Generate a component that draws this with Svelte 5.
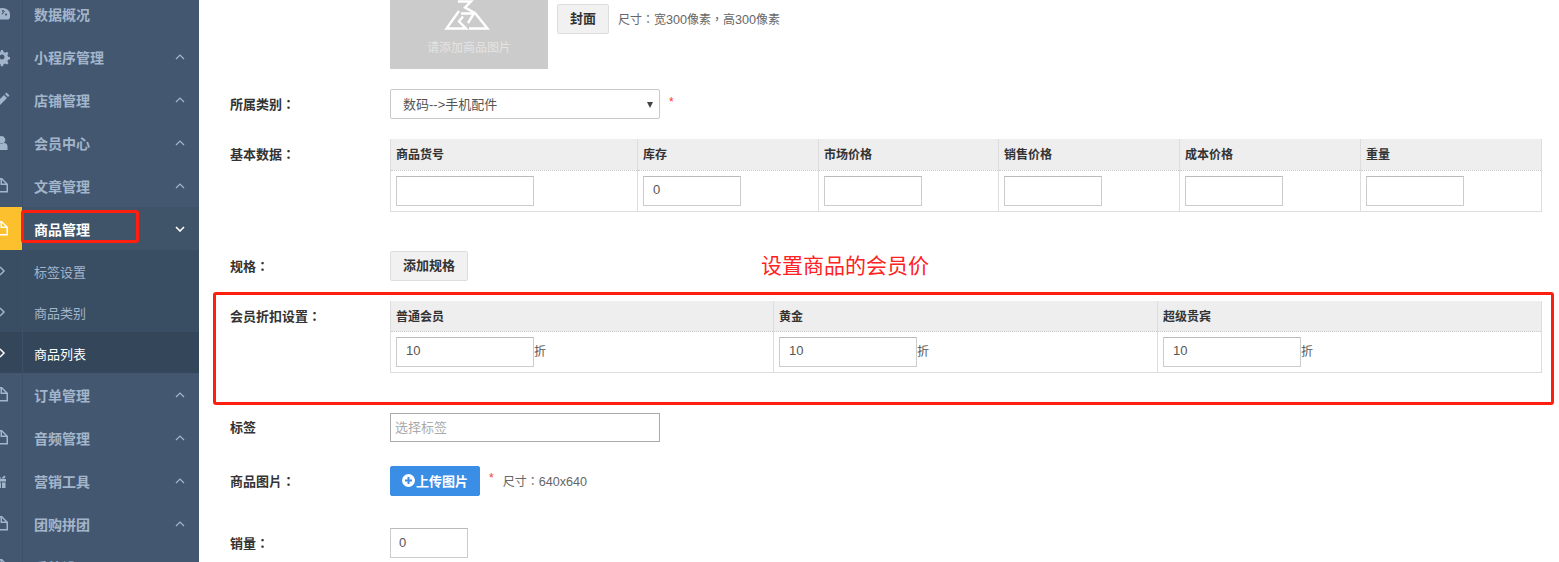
<script>
const icons = {
    dash: 'M-4 15a7.500 6 0 0 1 15 0a7.500 6 0 0 1-1.500 5.500H-2.500a7.500 6 0 0 1-1.500-5.500zM3.500 15.500l2.500-3.500-1-.5-2.500 3.500zM7 14.500a1 1 0 1 0 .01 0zM4 11a1 1 0 1 0 .01 0z',
    gear: 'M2 8h2l.5 2 1.700.8 1.800-1 1.400 1.400-1 1.800.7 1.700 2 .5v2l-2 .5-.7 1.700 1 1.800-1.400 1.400-1.800-1-1.700.7-.5 2h-2l-.5-2-1.700-.7-1.800 1-1.400-1.400 1-1.800-.7-1.700-2-.5v-2l2-.5.7-1.700-1-1.800 1.400-1.400 1.800 1 1.700-.8zM3 12.500a2.500 2.500 0 1 0 .01 0z',
    pen: 'M-3 21l1-4 7-7 3 3-7 7zM6 9l1.500-1.500 3 3L9 12z',
    user: 'M2.500 8a3.800 3.800 0 1 1-.01 0zM-3 22v-3.500c0-2.500 2-3.500 3.500-3.500h4.500c2 0 3.500 1 3.500 3.500V22z',
    gift: 'M-3 13h10v2.500H-3zM-2 16.500h4V22h-4zM3 16.500h3.500V22H3zM0 9.500l2.500 3 2.500-3 1.500 1-1 2h-6l-1-2z'
}
const file = 'M-4 7H3l6 6v8.500H-4V20H7.500v-6H1.500V8.500H-4zM3 9v3.500H6.500z'

let menu = [
    { name: '数据概况', icon: icons.dash, noArrow: true },
    { name: '小程序管理', icon: icons.gear },
    { name: '店铺管理', icon: icons.pen },
    { name: '会员中心', icon: icons.user },
    { name: '文章管理', icon: file },
    { name: '商品管理', icon: file, open: true, children: [
        { name: '标签设置' },
        { name: '商品类别' },
        { name: '商品列表', active: true }
    ] },
    { name: '订单管理', icon: file },
    { name: '音频管理', icon: file },
    { name: '营销工具', icon: icons.gift },
    { name: '团购拼团', icon: file },
    { name: '系统设置', icon: file }
]

let baseCols = [
    { title: '商品货号', width: 247, input: 138, value: '' },
    { title: '库存', width: 181, input: 98, value: '0' },
    { title: '市场价格', width: 180, input: 98, value: '' },
    { title: '销售价格', width: 181, input: 98, value: '' },
    { title: '成本价格', width: 181, input: 98, value: '' },
    { title: '重量', width: 181, input: 98, value: '' }
]
let levels = [
    { title: '普通会员', width: 383 },
    { title: '黄金', width: 384 },
    { title: '超级贵宾', width: 384 }
]
</script>

<div class="page">
    <aside class="sidebar">
        <ul class="nav">
            {#each menu as item}
            <li class="item" class:open={item.open}>
                <span class="ico">
                    <svg width="16" height="30" viewBox="-5 0 16 30"><path d={item.icon} fill="currentColor" fill-rule="evenodd"/></svg>
                </span>
                <span class="name">{item.name}</span>
                {#if !item.noArrow}
                <svg class="arrow" width="10" height="6" viewBox="0 0 10 6"><path d={item.open ? 'M1 1l4 4 4-4' : 'M1 5l4-4 4 4'} fill="none" stroke="currentColor" stroke-width={item.open ? 1.6 : 1.2}/></svg>
                {/if}
            </li>
            {#if item.children}
            {#each item.children as sub}
            <li class="sub" class:active={sub.active}>
                <span class="ico">
                    <svg width="8" height="10" viewBox="0 0 8 10"><path d="M2 1l4 4-4 4" fill="none" stroke="currentColor" stroke-width="1.500"/></svg>
                </span>
                <span class="name">{sub.name}</span>
            </li>
            {/each}
            {/if}
            {/each}
        </ul>
    </aside>

    <main class="main">
        <div class="row cover-row">
            <div class="cover">
                <svg width="46" height="30" viewBox="0 0 46 30">
                    <g fill="none" stroke="#fff" stroke-width="2.400">
                        <path d="M14 1.500h13l-6 6 10 5.500"/>
                        <path d="M15 11L2.500 28.500H22l-7-7 4-5"/>
                        <path d="M17 13.500h13l-6 9.500"/>
                        <path d="M31 13l12.500 15.500H25"/>
                    </g>
                </svg>
                <div class="cover-text">请添加商品图片</div>
            </div>
            <button class="btn cover-btn">封面</button>
            <span class="hint">尺寸：宽<span class="num">300</span>像素，高<span class="num">300</span>像素</span>
        </div>

        <div class="row">
            <label class="label">所属类别：</label>
            <div class="select">数码--&gt;手机配件<i class="caret"></i></div>
            <span class="star">*</span>
        </div>

        <div class="row base-row">
            <label class="label">基本数据：</label>
            <table class="tbl">
                <thead>
                    <tr>
                        {#each baseCols as col}
                        <th style="width: {col.width}px">{col.title}</th>
                        {/each}
                    </tr>
                </thead>
                <tbody>
                    <tr>
                        {#each baseCols as col}
                        <td><input class="input" style="width: {col.input}px" value={col.value} /></td>
                        {/each}
                    </tr>
                </tbody>
            </table>
        </div>

        <div class="row">
            <label class="label">规格：</label>
            <button class="btn">添加规格</button>
            <span class="note">设置商品的会员价</span>
        </div>

        <div class="row level-row">
            <label class="label">会员折扣设置：</label>
            <table class="tbl">
                <thead>
                    <tr>
                        {#each levels as level}
                        <th style="width: {level.width}px">{level.title}</th>
                        {/each}
                    </tr>
                </thead>
                <tbody>
                    <tr>
                        {#each levels as level}
                        <td><div class="cell"><input class="input level" value="10" /><span class="unit">折</span></div></td>
                        {/each}
                    </tr>
                </tbody>
            </table>
        </div>

        <div class="row tag-row">
            <label class="label plain">标签</label>
            <input class="tag" placeholder="选择标签" />
        </div>

        <div class="row pic-row">
            <label class="label">商品图片：</label>
            <button class="btn primary">
                <svg width="13" height="13" viewBox="0 0 13 13"><circle cx="6.500" cy="6.500" r="6.500" fill="#fff"/><path d="M6.500 3v7M3 6.500h7" stroke="#3a8ee6" stroke-width="2"/></svg>上传图片
            </button>
            <span class="star">*</span>
            <span class="hint">尺寸：<span class="num">640x640</span></span>
        </div>

        <div class="row">
            <label class="label">销量：</label>
            <input class="input sales" value="0" />
        </div>

        <div class="mark mark-main"></div>
    </main>

    <div class="mark mark-nav"></div>
</div>

<style>
:global(body) {
    margin: 0;
    background: #fff;
    font-family: "Liberation Sans", "Noto Sans CJK SC", sans-serif;
    font-size: 13px;
    color: #333;
    overflow: hidden;
}
.page {
    position: relative;
    display: flex;
    width: 1559px;
    height: 562px;
    overflow: hidden;
}
.sidebar {
    flex: 0 0 199px;
    height: 562px;
    overflow: hidden;
    background: #435870;
}
.nav {
    list-style: none;
    margin: -8px 0 0 -18px;
    padding: 0;
    width: 217px;
}
.item, .sub {
    display: flex;
    align-items: center;
    color: #a3b5cb;
    font-size: 14px;
}
.item {
    height: 43px;
    font-weight: 700;
}
.item.open {
    background: #3f5369;
    color: #fff;
}
.item.open .ico {
    background: #fcbf2e;
    color: #fff;
}
.sub {
    height: 41px;
    font-size: 13px;
    background: #3a4e63;
}
.sub .name {
    margin-top: 1px;
}
.sub.active {
    background: #34465a;
    color: #fff;
}
.ico {
    flex: 0 0 41px;
    height: 100%;
    box-sizing: border-box;
    border-right: 1px solid #3c5066;
    display: flex;
    align-items: center;
    justify-content: center;
}
.name {
    margin-left: 11px;
    flex: 1;
}
.arrow {
    margin-right: 14px;
}
.main {
    position: relative;
    flex: 1;
    margin-top: -90px;
    padding-left: 31px;
}
.row {
    display: flex;
    align-items: flex-start;
    margin-bottom: 20px;
}
.base-row {
    margin-bottom: 39px;
}
.level-row {
    margin-bottom: 40px;
}
.label {
    flex: 0 0 160px;
    height: 30px;
    font-family: "Liberation Sans", "Noto Sans CJK TC", sans-serif;
    font-size: 13px;
    font-weight: 700;
    line-height: 32px;
    color: #333;
}
.label.plain {
    line-height: 30px;
}
.cover-row {
    margin-left: 160px;
}
.cover {
    width: 158px;
    height: 159px;
    background: #cbcbcb;
    display: flex;
    flex-direction: column;
    align-items: center;
    justify-content: flex-end;
}
.cover svg {
    margin: 0 4px 8px 0;
}
.cover-text {
    color: #e4e4e4;
    font-size: 12px;
    margin-bottom: 14px;
}
.btn {
    height: 30px;
    padding: 0 12px 3px;
    font: inherit;
    font-weight: 700;
    color: #333;
    background: #f1f1f1;
    border: 1px solid #ddd;
    border-radius: 2px;
}
.cover-btn {
    margin: 94px 0 0 9px;
}
.cover-row .hint {
    margin: 95px 0 0 9px;
}
.hint {
    font-family: "Liberation Sans", "Noto Sans CJK TC", sans-serif;
    font-size: 12px;
    line-height: 30px;
    color: #666;
}
.num {
    font-size: 12.600px;
}
.select {
    position: relative;
    width: 270px;
    height: 30px;
    box-sizing: border-box;
    border: 1px solid #c9c9c9;
    border-radius: 2px;
    padding-left: 12px;
    line-height: 30px;
    font-size: 13px;
    color: #555;
}
.caret {
    position: absolute;
    right: 6px;
    top: 12px;
    width: 0;
    height: 0;
    border-left: 3px solid transparent;
    border-right: 3px solid transparent;
    border-top: 6px solid #444;
}
.star {
    color: #f33;
    margin-left: 9px;
    line-height: 26px;
    font-size: 12px;
}
.tbl {
    width: 1151px;
    border-collapse: collapse;
    table-layout: fixed;
    font-size: 12px;
}
.tbl th {
    box-sizing: border-box;
    height: 31px;
    padding: 0 5px 1px;
    background: #eee;
    border: 1px solid #ddd;
    border-top: 0;
    border-bottom: 1px dotted #ccc;
    text-align: left;
    font-weight: 700;
    color: #333;
}
.tbl td {
    height: 40px;
    padding: 0 5px;
    border: 1px solid #ddd;
    border-top: 0;
}
.cell {
    display: flex;
    align-items: center;
}
.input {
    box-sizing: border-box;
    height: 30px;
    border: 1px solid #ccc;
    border-top-color: #bbb;
    padding: 0 9px 2px;
    font: inherit;
    font-size: 13px;
    color: #555;
    vertical-align: middle;
    outline: 0;
}
.input.level {
    width: 138px;
    padding-bottom: 3px;
}
.unit {
    margin-top: -4px;
    color: #555;
    font-size: 12px;
}
.sales {
    width: 78px;
    padding-left: 8px;
}
.note {
    margin-left: 293px;
    font-size: 21px;
    line-height: 30px;
    color: #f22;
}
.tag-row {
    margin-bottom: 23px;
}
.tag {
    box-sizing: border-box;
    width: 270px;
    height: 29px;
    border: 1px solid #aaa;
    padding: 0 4px;
    font: inherit;
    outline: 0;
}
.tag::placeholder {
    color: #aaa;
}
.pic-row {
    margin-bottom: 31px;
}
.primary {
    width: 90px;
    padding: 0 0 2px;
    display: flex;
    align-items: center;
    justify-content: center;
    gap: 1px;
    color: #fff;
    background: #3a8ee6;
    border-color: #3a8ee6;
}
.pic-row .star {
    line-height: 24px;
}
.pic-row .hint {
    margin: 1px 0 0 9px;
}
.mark {
    position: absolute;
    box-sizing: border-box;
    border: 3px solid #ff1f10;
    border-radius: 3px;
}
.mark-main {
    left: 14px;
    top: 382px;
    width: 1341px;
    height: 113px;
}
.mark-nav {
    left: 21px;
    top: 210px;
    width: 118px;
    height: 33px;
}
</style>
